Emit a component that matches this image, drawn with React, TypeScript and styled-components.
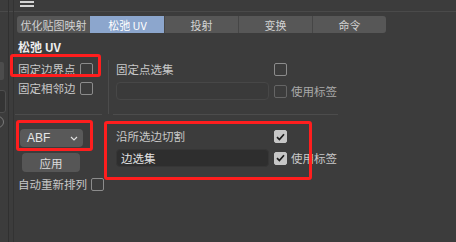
import React from 'react';
import styled, { createGlobalStyle } from 'styled-components';

const GlobalStyle = createGlobalStyle`
  html, body {
    margin: 0;
    padding: 0;
    background: #3c3c3c;
  }
  body {
    font-family: "Noto Sans CJK SC", "Noto Sans", sans-serif;
    color: #c8c8c8;
    font-size: 11.5px;
  }
`

const Page = styled.div`
  position: relative;
  width: 456px;
  height: 242px;
  overflow: hidden;
  display: flex;
  background: #3c3c3c;
`

const SideStrip = styled.div`
  width: 8px;
  border-right: 1px solid #303030;
  display: flex;
  flex-direction: column;
  overflow: hidden;
`

const StripHead = styled.div`
  height: 11px;
  border-bottom: 1px solid #4a4a4a;
`

const StripBlock = styled.div`
  margin-top: 50px;
  width: 4px;
  height: 18px;
  background: #4c4c4c;
  border-radius: 0 2px 2px 0;
`

const StripField = styled.div`
  margin-top: 10px;
  margin-left: -6px;
  width: 10px;
  height: 21px;
  background: #343434;
  border: 1px solid #4e4e4e;
  border-radius: 3px;
`

const StripKnob = styled.div`
  margin-top: 3px;
  margin-left: -8px;
  width: 10px;
  height: 10px;
  border: 1px solid #7a7a7a;
  border-radius: 50%;
`

const Gutter = styled.div`
  width: 4px;
  border-right: 1px solid #333;
  display: flex;
  flex-direction: column;
`

const Main = styled.div`
  flex: 1;
  display: flex;
  flex-direction: column;
`

const TopBar = styled.div`
  height: 12px;
  box-sizing: border-box;
  border-bottom: 1px solid #4a4a4a;
  padding: 1px 0 0 6px;
  display: flex;
  flex-direction: column;
  gap: 2px;
`

const MenuLine = styled.div`
  width: 14px;
  height: 2px;
  background: #d4d4d4;
`

const Tabs = styled.div`
  margin: 4px 0 0 3px;
  width: 369px;
  height: 17px;
  display: flex;
  background: #575757;
  border-radius: 3px;
  overflow: hidden;
`

const Tab = styled.div<{ $active?: boolean }>`
  flex: 1;
  display: flex;
  align-items: center;
  justify-content: center;
  font-size: 11px;
  color: ${p => (p.$active ? '#ffffff' : '#d2d2d2')};
  background: ${p => (p.$active ? '#8ca6cd' : 'transparent')};
  border-left: 1px solid ${p => (p.$active ? '#8ca6cd' : '#464646')};
  &:first-child {
    border-left: none;
  }
`

const Title = styled.div`
  margin: 7px 0 0 4px;
  height: 14px;
  line-height: 14px;
  font-size: 12px;
  font-weight: 700;
  color: #ececec;
`

const Section = styled.div<{ $top: number }>`
  display: grid;
  grid-template-columns: 90px 4px 1px 4px 225px;
  margin-top: ${p => p.$top}px;
`

const LeftCol = styled.div<{ $pad?: number }>`
  padding: ${p => p.$pad || 0}px 0 0 4px;
  display: flex;
  flex-direction: column;
`

const VDivider = styled.div`
  grid-column: 3;
  grid-row: 1 / span 2;
  background: #4c4c4c;
`

const RightCol = styled.div<{ $pad?: number }>`
  grid-column: 5;
  padding: ${p => p.$pad || 0}px 0 0 3px;
  display: flex;
  flex-direction: column;
`

const Row = styled.div<{ $h: number; $mt?: number }>`
  height: ${p => p.$h}px;
  margin-top: ${p => p.$mt || 0}px;
  display: flex;
  align-items: center;
  gap: 4px;
  white-space: nowrap;
`

const FieldRow = styled.div<{ $h: number; $mt?: number }>`
  height: ${p => p.$h}px;
  margin-top: ${p => p.$mt || 0}px;
  display: grid;
  grid-template-columns: 153px 13px auto;
  column-gap: 5px;
  align-items: center;
  white-space: nowrap;
`

const Label = styled.span<{ $dim?: boolean }>`
  color: ${p => (p.$dim ? '#a9a9a9' : '#c8c8c8')};
  line-height: 13px;
`

const SideLabel = styled(Label)`
  margin-left: -1px;
`

const Check = styled.span<{ $checked?: boolean; $dim?: boolean }>`
  width: 13px;
  height: 13px;
  box-sizing: border-box;
  border-radius: 2px;
  border: 1px solid ${p => (p.$checked ? '#c6c6c6' : p.$dim ? '#656565' : '#8c8c8c')};
  background: ${p => (p.$checked ? '#c6c6c6' : 'transparent')};
  display: flex;
  align-items: center;
  justify-content: center;
  flex-shrink: 0;
`

const Field = styled.div<{ $dark?: boolean }>`
  height: 18px;
  box-sizing: border-box;
  border-radius: 4px;
  background: ${p => (p.$dark ? '#2e2e2e' : '#3a3a3a')};
  border: 1px solid ${p => (p.$dark ? '#363636' : '#474747')};
  padding-left: 4px;
  display: flex;
  align-items: center;
  color: #e2e2e2;
  font-size: 11.5px;
`

const HRule = styled.div<{ $col: number; $ml: number; $mr: number }>`
  grid-column: ${p => p.$col};
  grid-row: 3;
  height: 1px;
  background: #4c4c4c;
  margin: 0 ${p => p.$mr}px 0 ${p => p.$ml}px;
`

const Gap = styled.div<{ $h: number }>`
  grid-column: 1;
  grid-row: 2;
  height: ${p => p.$h}px;
`

const Dropdown = styled.div`
  margin-left: 2px;
  width: 63px;
  height: 18px;
  box-sizing: border-box;
  background: #595959;
  border-radius: 4px;
  padding: 0 5px 0 7px;
  display: flex;
  align-items: center;
  justify-content: space-between;
  font-family: "Liberation Sans", Arial, sans-serif;
  font-size: 12px;
  color: #e6e6e6;
`

const Button = styled.div`
  margin: 6px 0 0 4px;
  width: 58px;
  height: 19px;
  background: #565656;
  border-radius: 4px;
  display: flex;
  align-items: center;
  justify-content: center;
  color: #dcdcdc;
  font-size: 11.5px;
`

const Mark = styled.div<{ $l: number; $t: number; $w: number; $h: number }>`
  position: absolute;
  left: ${p => p.$l}px;
  top: ${p => p.$t}px;
  width: ${p => p.$w}px;
  height: ${p => p.$h}px;
  box-sizing: border-box;
  border: 3px solid #ff1e1e;
  border-radius: 3px;
  pointer-events: none;
`

function Tick() {
  return (
    <svg width="9" height="8" viewBox="0 0 9 8">
      <path d="M1 4.2 L3.4 6.6 L8 1.2" fill="none" stroke="#1c1c1c" strokeWidth="1.7" />
    </svg>
  );
}

function Chevron() {
  return (
    <svg width="8" height="5" viewBox="0 0 8 5">
      <path d="M1 1 L4 4 L7 1" fill="none" stroke="#e0e0e0" strokeWidth="1.2" />
    </svg>
  );
}

export default function App() {
  return (
    <Page>
      <GlobalStyle />
      <SideStrip>
        <StripHead />
        <StripBlock />
        <StripField />
        <StripKnob />
      </SideStrip>
      <Gutter>
        <StripHead />
      </Gutter>
      <Main>
        <TopBar>
          <MenuLine />
          <MenuLine />
        </TopBar>
        <Tabs>
          <Tab>优化贴图映射</Tab>
          <Tab $active>松弛 UV</Tab>
          <Tab>投射</Tab>
          <Tab>变换</Tab>
          <Tab>命令</Tab>
        </Tabs>
        <Title>松弛 UV</Title>

        <Section $top={6}>
          <LeftCol>
            <Row $h={19}>
              <Label>固定边界点</Label>
              <Check />
            </Row>
            <Row $h={19}>
              <Label>固定相邻边</Label>
              <Check />
            </Row>
          </LeftCol>
          <VDivider />
          <RightCol>
            <FieldRow $h={19}>
              <Label>固定点选集</Label>
              <Check />
            </FieldRow>
            <FieldRow $h={18} $mt={3}>
              <Field />
              <Check $dim />
              <SideLabel $dim>使用标签</SideLabel>
            </FieldRow>
          </RightCol>
          <Gap $h={14} />
          <HRule $col={1} $ml={1} $mr={2} />
          <HRule $col={5} $ml={0} $mr={0} />
        </Section>

        <Section $top={0}>
          <LeftCol $pad={14}>
            <Dropdown>
              ABF
              <Chevron />
            </Dropdown>
            <Button>应用</Button>
            <Row $h={13} $mt={6}>
              <Label>自动重新排列</Label>
              <Check />
            </Row>
          </LeftCol>
          <RightCol $pad={15}>
            <FieldRow $h={13}>
              <Label>沿所选边切割</Label>
              <Check $checked>
                <Tick />
              </Check>
            </FieldRow>
            <FieldRow $h={18} $mt={6}>
              <Field $dark>边选集</Field>
              <Check $checked>
                <Tick />
              </Check>
              <SideLabel>使用标签</SideLabel>
            </FieldRow>
          </RightCol>
        </Section>
      </Main>

      <Mark $l={10} $t={54} $w={91} $h={23} />
      <Mark $l={16} $t={120} $w={77} $h={31} />
      <Mark $l={104} $t={121} $w={208} $h={59} />
    </Page>
  );
}
